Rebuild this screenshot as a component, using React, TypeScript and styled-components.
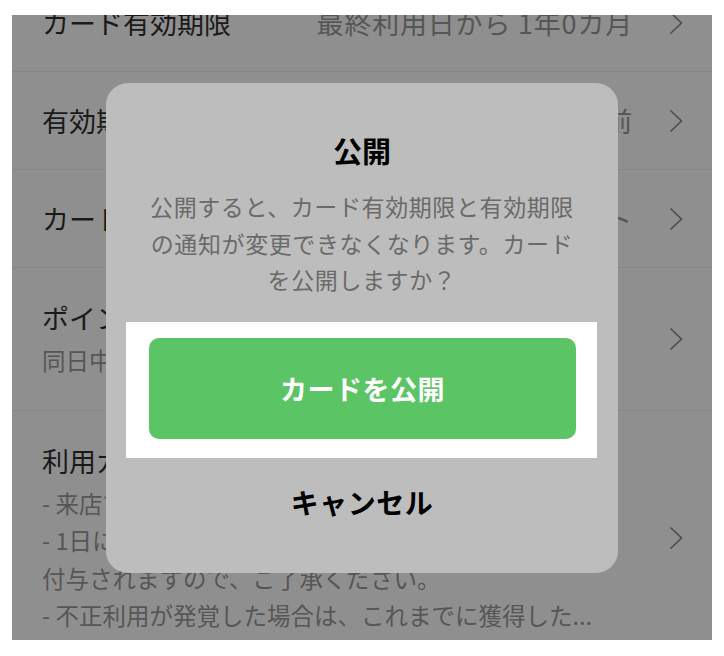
import styled, { createGlobalStyle } from 'styled-components';

const GlobalStyle = createGlobalStyle`
  html, body {
    margin: 0;
    padding: 0;
    background: #ffffff;
  }
  body {
    font-family: "Noto Sans CJK JP", "Noto Sans", sans-serif;
  }
`;

const Screen = styled.div`
  position: relative;
  width: 700px;
  height: 625px;
  margin: 15px 12px;
  background-color: #8f8f8f;
  overflow: hidden;
`;

const List = styled.div`
  display: flex;
  flex-direction: column;
  margin-top: -41px;
`;

const Row = styled.div<{ $tall?: boolean }>`
  display: flex;
  align-items: center;
  min-height: 98px;
  padding: ${(p) => (p.$tall ? '30px 29px 30px 30px' : '0 29px 0 30px')};
  border-bottom: 1px solid #858585;
  box-sizing: border-box;
`;

const RowBody = styled.div`
  flex: 1;
  min-width: 0;
  display: flex;
  flex-direction: column;
`;

const Label = styled.div`
  font-size: 27px;
  line-height: 40px;
  color: #1a1a1a;
  white-space: nowrap;
`;

const Sub = styled.div`
  margin-top: 4px;
  font-size: 23.5px;
  line-height: 37.5px;
  color: #565656;
  white-space: nowrap;
`;

const Value = styled.div`
  font-size: 27px;
  line-height: 40px;
  letter-spacing: 0.8px;
  color: #565656;
  margin-right: 36px;
  white-space: nowrap;
`;

const Chevron = styled.svg`
  width: 14px;
  height: 24px;
  flex-shrink: 0;
`;

const Modal = styled.div`
  position: absolute;
  left: 94px;
  top: 68px;
  width: 512px;
  height: 490px;
  background-color: #bdbdbd;
  border-radius: 22px;
  display: flex;
  flex-direction: column;
  align-items: stretch;
  padding-top: 47px;
  box-sizing: border-box;
`;

const Title = styled.div`
  font-size: 29px;
  line-height: 40px;
  font-weight: 700;
  color: #000;
  text-align: center;
`;

const Message = styled.p`
  margin: 18px 0 0;
  font-size: 23px;
  line-height: 36.5px;
  letter-spacing: 0.6px;
  color: #6a6a6a;
  text-align: center;
`;

const Spotlight = styled.div`
  margin: 24px 21px 0 20px;
  background-color: #ffffff;
  padding: 16px 21px 19px 23px;
`;

const PrimaryButton = styled.button`
  display: block;
  width: 100%;
  height: 101px;
  border: none;
  border-radius: 10px;
  background-color: #5bc464;
  color: #ffffff;
  font-family: inherit;
  font-size: 27px;
  font-weight: 700;
  letter-spacing: 0.5px;
  cursor: pointer;
`;

const CancelButton = styled.button`
  margin-top: 24px;
  border: none;
  background: none;
  color: #000;
  font-family: inherit;
  font-size: 28px;
  line-height: 40px;
  font-weight: 700;
  letter-spacing: 0.5px;
  padding: 0;
  cursor: pointer;
`;

const Arrow = () => (
  <Chevron viewBox="0 0 14 24">
    <polyline points="1.5,1.5 12.5,12 1.5,22.5" fill="none" stroke="#4a4a4a" strokeWidth="1.5" />
  </Chevron>
);

export default function App() {
  return (
    <>
      <GlobalStyle />
      <Screen>
        <List>
          <Row>
            <RowBody>
              <Label>カード有効期限</Label>
            </RowBody>
            <Value>最終利用日から 1年0カ月</Value>
            <Arrow />
          </Row>
          <Row>
            <RowBody>
              <Label>有効期限の通知</Label>
            </RowBody>
            <Value>30日前</Value>
            <Arrow />
          </Row>
          <Row>
            <RowBody>
              <Label>カードデザイン</Label>
            </RowBody>
            <Value>デフォルト</Value>
            <Arrow />
          </Row>
          <Row $tall>
            <RowBody>
              <Label>ポイント付与の制限</Label>
              <Sub>同日中の重複付与を制限する</Sub>
            </RowBody>
            <Arrow />
          </Row>
          <Row $tall>
            <RowBody>
              <Label>利用ガイド</Label>
              <Sub>
                - 来店でポイントが貯まります。
                <br />- 1日に何度来店してもポイントは1回のみ
                <br />付与されますので、ご了承ください。
                <br />- 不正利用が発覚した場合は、これまでに獲得した...
              </Sub>
            </RowBody>
            <Arrow />
          </Row>
        </List>

        <Modal>
          <Title>公開</Title>
          <Message>
            公開すると、カード有効期限と有効期限
            <br />
            の通知が変更できなくなります。カード
            <br />
            を公開しますか？
          </Message>
          <Spotlight>
            <PrimaryButton>カードを公開</PrimaryButton>
          </Spotlight>
          <CancelButton>キャンセル</CancelButton>
        </Modal>
      </Screen>
    </>
  );
}
